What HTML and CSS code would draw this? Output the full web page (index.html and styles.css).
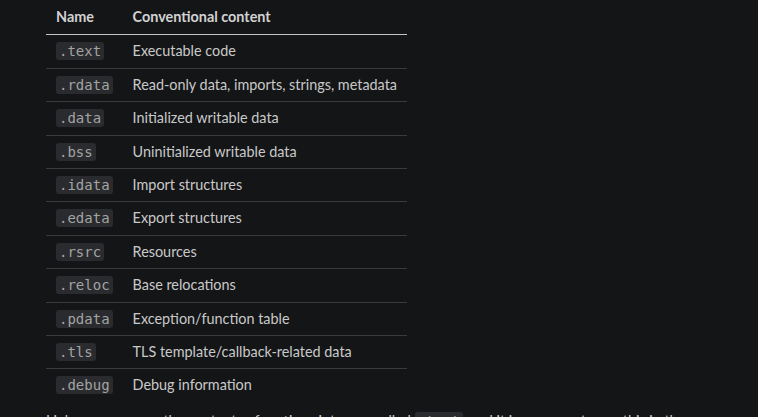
FILE: index.html
```html
<!DOCTYPE html>
<html lang="en">

<head>
    <meta charset="UTF-8" />
    <title>PE sections</title>
    <link rel="stylesheet" href="styles.css">
</head>

<body>
    <div class="content">
        <table class="sections">
            <thead>
                <tr>
                    <th>Name</th>
                    <th>Conventional content</th>
                </tr>
            </thead>
            <tbody>
                <tr><td><code>.text</code></td><td>Executable code</td></tr>
                <tr><td><code>.rdata</code></td><td>Read-only data, imports, strings, metadata</td></tr>
                <tr><td><code>.data</code></td><td>Initialized writable data</td></tr>
                <tr><td><code>.bss</code></td><td>Uninitialized writable data</td></tr>
                <tr><td><code>.idata</code></td><td>Import structures</td></tr>
                <tr><td><code>.edata</code></td><td>Export structures</td></tr>
                <tr><td><code>.rsrc</code></td><td>Resources</td></tr>
                <tr><td><code>.reloc</code></td><td>Base relocations</td></tr>
                <tr><td><code>.pdata</code></td><td>Exception/function table</td></tr>
                <tr><td><code>.tls</code></td><td>TLS template/callback-related data</td></tr>
                <tr><td><code>.debug</code></td><td>Debug information</td></tr>
            </tbody>
        </table>

        <p>Linkers can merge the contents of sections into one called <code>.text</code>, and it is common to see this in the loader, as it reads only <code>flags</code> fields.</p>
    </div>
</body>

</html>
```

FILE: styles.css
```css
body {
    font-family: Lato, "Noto Sans", sans-serif;
    font-size: 14.4px;
    line-height: 22.4px;
    margin: 0;
    padding: 0;
    background-color: #141517;
    color: #c9c9c9;
}

.content {
    padding: 0 46px;
}

.sections {
    border-collapse: collapse;
    margin: 0;
}

.sections th {
    text-align: left;
    font-weight: bold;
    color: #d2d2d2;
    padding: 6px 10px 6px 10px;
    border-bottom: 1px solid #c4c4c4;
}

.sections td {
    padding: 5px 10px;
    border-bottom: 1px solid #3a3b3d;
}

.sections tbody tr:last-child td {
    border-bottom: none;
}

code {
    font-family: "DejaVu Sans Mono", monospace;
    font-size: 14px;
    background: #2a2b2e;
    color: #a3a3a3;
    padding: 1px 3px;
    border-radius: 3px;
}

p {
    margin: 8px 0 0;
}
```
